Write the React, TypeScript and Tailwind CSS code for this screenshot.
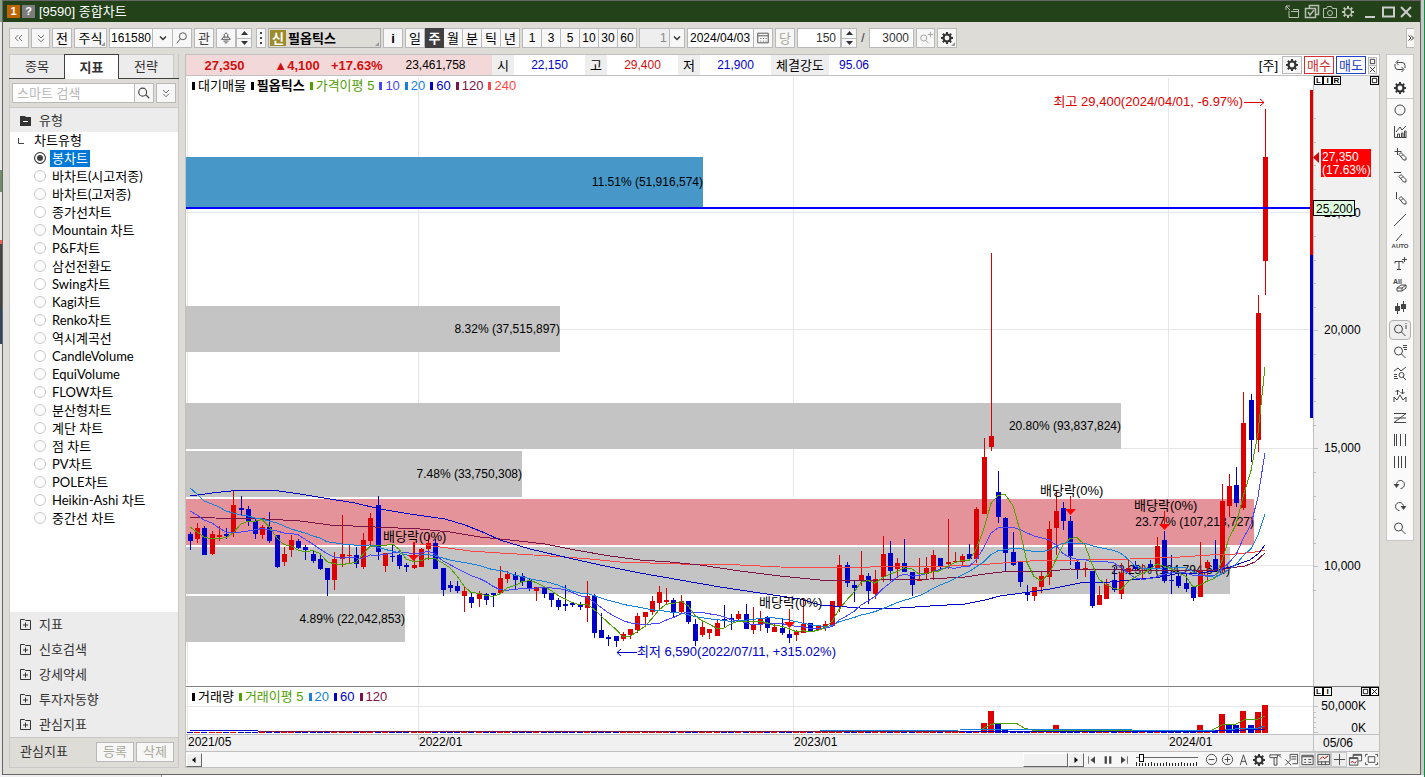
import type { ReactNode } from 'react';

const FONT = "font-['Liberation_Sans','Noto_Sans_CJK_KR',sans-serif]";
const BTN = 'flex h-5 shrink-0 items-center justify-center border border-[#b9b9b9] bg-[#f7f7f7] text-[13px] leading-none text-black';

// colour, high, body top, body bottom, low (chart y)
type Candle = [string, number, number, number, number];

const candles: Candle[] = [
  ['b', 532, 534, 541, 550], ['r', 523, 528, 539, 543], ['b', 526, 528, 555, 555], ['r', 531, 534, 554, 555], ['r', 526, 535, 537, 541],
  ['b', 528, 534, 536, 539], ['r', 491, 505, 533, 537], ['b', 496, 508, 510, 515], ['b', 506, 509, 521, 526], ['b', 519, 521, 534, 539],
  ['r', 525, 527, 535, 539], ['b', 512, 527, 541, 543], ['b', 535, 535, 567, 568], ['r', 547, 554, 562, 566], ['r', 535, 540, 550, 557],
  ['b', 539, 541, 548, 549], ['b', 545, 547, 550, 560], ['b', 551, 554, 561, 563], ['b', 553, 559, 569, 570], ['b', 568, 568, 580, 596],
  ['r', 552, 559, 580, 590], ['r', 515, 554, 559, 567], ['r', 544, 555, 556, 563], ['b', 547, 555, 564, 568], ['r', 533, 540, 567, 569],
  ['r', 513, 518, 541, 547], ['b', 496, 505, 552, 560], ['r', 553, 553, 566, 572], ['b', 544, 556, 557, 562], ['b', 554, 555, 566, 569],
  ['b', 563, 565, 567, 572], ['r', 542, 565, 568, 569], ['r', 548, 549, 567, 567], ['r', 535, 543, 549, 560], ['b', 539, 543, 569, 569],
  ['b', 568, 568, 590, 596], ['b', 581, 585, 588, 592], ['b', 581, 586, 591, 593], ['r', 587, 591, 596, 612], ['b', 592, 597, 603, 608],
  ['r', 591, 593, 599, 607], ['b', 593, 594, 600, 605], ['b', 593, 593, 595, 607], ['r', 566, 578, 593, 594], ['r', 571, 574, 579, 583],
  ['b', 572, 575, 580, 589], ['b', 573, 576, 582, 586], ['b', 579, 580, 589, 591], ['r', 587, 587, 591, 601], ['b', 586, 588, 594, 598],
  ['b', 593, 593, 600, 607], ['b', 598, 600, 607, 610], ['b', 585, 604, 606, 611], ['b', 602, 603, 605, 607], ['b', 602, 604, 607, 610],
  ['r', 581, 596, 608, 622], ['b', 594, 596, 633, 638], ['b', 613, 630, 638, 638], ['b', 635, 637, 639, 646], ['b', 636, 636, 641, 647],
  ['r', 632, 634, 639, 641], ['r', 629, 629, 635, 639], ['r', 613, 616, 630, 633], ['r', 612, 612, 617, 624], ['r', 596, 601, 612, 615],
  ['r', 586, 592, 603, 609], ['r', 588, 600, 602, 604], ['b', 598, 600, 613, 617], ['r', 595, 601, 612, 613], ['b', 601, 601, 622, 624],
  ['b', 619, 624, 641, 646], ['r', 620, 627, 635, 637], ['r', 629, 629, 633, 639], ['r', 620, 623, 636, 636], ['b', 605, 619, 620, 627],
  ['b', 614, 618, 620, 630], ['r', 611, 614, 619, 621], ['b', 604, 614, 629, 629], ['r', 607, 625, 630, 634], ['r', 611, 618, 625, 631],
  ['b', 616, 617, 628, 633], ['r', 623, 627, 632, 632], ['b', 618, 628, 633, 635], ['b', 630, 634, 638, 643], ['r', 630, 632, 635, 641],
  ['r', 598, 624, 633, 633], ['b', 623, 623, 632, 632], ['r', 625, 626, 630, 631], ['r', 621, 624, 628, 631], ['r', 601, 601, 626, 626],
  ['r', 555, 565, 607, 612], ['b', 562, 565, 583, 587], ['b', 580, 585, 588, 602], ['r', 551, 575, 581, 586], ['b', 573, 576, 591, 604],
  ['r', 570, 579, 594, 599], ['r', 536, 554, 577, 582], ['b', 541, 553, 571, 581], ['r', 558, 563, 569, 578], ['b', 539, 563, 572, 572],
  ['b', 572, 572, 585, 596], ['r', 558, 579, 581, 581], ['r', 557, 568, 574, 579], ['r', 550, 555, 572, 580], ['b', 558, 558, 567, 569],
  ['r', 519, 562, 564, 569], ['r', 552, 561, 562, 563], ['r', 554, 556, 562, 567], ['b', 544, 554, 559, 560], ['r', 507, 509, 559, 563],
  ['r', 438, 457, 514, 514], ['r', 253, 436, 447, 451], ['b', 471, 492, 517, 523], ['b', 517, 518, 553, 571], ['b', 532, 552, 565, 566],
  ['b', 562, 562, 582, 587], ['b', 585, 592, 595, 601], ['r', 587, 587, 596, 601], ['r', 571, 576, 587, 593], ['r', 521, 529, 577, 585],
  ['r', 490, 511, 528, 555], ['b', 502, 508, 521, 530], ['b', 516, 521, 556, 565], ['b', 559, 562, 570, 579], ['r', 562, 568, 570, 577],
  ['b', 571, 571, 606, 608], ['r', 586, 595, 605, 605], ['r', 579, 584, 599, 599], ['b', 567, 580, 590, 592], ['r', 563, 573, 594, 599],
  ['r', 559, 568, 572, 572], ['b', 561, 565, 569, 570], ['r', 564, 568, 569, 580], ['b', 560, 564, 568, 570], ['r', 537, 546, 568, 569],
  ['b', 531, 540, 581, 583], ['b', 555, 580, 581, 594], ['b', 573, 576, 586, 588], ['b', 574, 583, 589, 592], ['b', 586, 587, 598, 601],
  ['r', 542, 571, 597, 597], ['r', 560, 562, 568, 581], ['b', 540, 559, 571, 571], ['r', 484, 501, 570, 573], ['r', 474, 486, 506, 517],
  ['b', 467, 485, 503, 507], ['r', 392, 423, 508, 510], ['b', 394, 400, 440, 462], ['r', 295, 313, 440, 452], ['r', 109, 157, 261, 295],
];

const RED = '#dc0000';
const BLUE = '#0000c8';
const candleX = (i: number) => Math.round(190 + i * 7.215);

// simple moving average of the closes; head covers the weeks before the first full window
const average = (n: number, head: number[]) =>
  candles
    .map((_, i) => {
      if (i < n - 1) return `${candleX(i)},${head[i]}`;
      const sum = candles.slice(i - n + 1, i + 1).reduce((s, c) => s + (c[0] === 'r' ? c[2] : c[3]), 0);
      return `${candleX(i)},${(sum / n).toFixed(1)}`;
    })
    .join(' ');

const averages = [
  { color: '#ff4646', points: '420,544 440,547 470,551 500,553 550,556 590,559 620,562 680,564 740,565 780,567 840,568 900,566 950,566 990,564 1030,561 1080,560 1130,559 1180,557 1210,555 1235,554 1255,552 1265,550' },
  { color: '#7d1446', points: '190,517 215,518 265,519 300,521 330,525 375,527 420,529 450,532 480,537 510,540 545,544 575,550 610,556 640,560 670,562 700,565 740,571 780,576 820,580 880,580 930,579 965,577 985,574 1010,571 1050,571 1070,569 1130,570 1200,571 1215,570 1245,566 1255,562 1265,553' },
  { color: BLUE, points: '190,496 212,493 240,490 272,490 300,494 330,499 355,503 380,509 410,514 445,519 465,525 485,533 500,540 530,549 560,556 600,565 640,573 680,580 720,587 760,593 800,599 820,605 860,608 900,608 930,606 965,604 985,600 1000,596 1030,592 1050,589 1080,583 1110,582 1130,580 1160,577 1175,574 1200,573 1215,571 1230,567 1250,560 1258,554 1265,545' },
  { color: '#1482dc', points: average(20, [488, 494, 501, 504, 507, 511, 513, 515, 516, 518, 519, 521, 523, 526, 529, 531, 533, 536, 538]) },
  { color: '#4646ff', points: average(10, [511, 515, 520, 523, 528, 532, 533, 532, 531]) },
  { color: '#50a000', points: average(5, [527, 532, 537, 539]) },
];

const profile = [
  { y: 157, h: 51, end: 703, color: '#4798c8', label: '11.51% (51,916,574)' },
  { y: 306, h: 46, end: 560, color: '#c4c4c4', label: '8.32% (37,515,897)' },
  { y: 403, h: 46, end: 1121, color: '#c4c4c4', label: '20.80% (93,837,824)' },
  { y: 451, h: 46, end: 522, color: '#c4c4c4', label: '7.48% (33,750,308)' },
  { y: 499, h: 46, end: 1254, color: '#e5939a', label: '23.77% (107,213,727)' },
  { y: 547, h: 47, end: 1230, color: '#c4c4c4', label: '23.23% (104,794,648)' },
  { y: 596, h: 46, end: 405, color: '#c4c4c4', label: '4.89% (22,042,853)' },
];

const dividends = [
  { x: 413, text: 541, top: 542 },
  { x: 789, text: 607, top: 609 },
  { x: 1070, text: 495, top: 496 },
  { x: 1164, text: 510, top: 511 },
];

// index -> top of a tall volume bar and its colour
const volumes: Record<number, [number, string]> = {
  110: [723, RED], 111: [711, RED], 112: [724, BLUE], 113: [729, BLUE], 119: [730, RED], 120: [725, RED], 140: [725, RED], 142: [730, BLUE],
  143: [714, RED], 144: [724, BLUE], 145: [725, BLUE], 146: [711, RED], 147: [725, BLUE], 148: [712, RED], 149: [705, RED],
};

const chartTypes = [
  '봉차트', '바차트(시고저종)', '바차트(고저종)', '종가선차트', 'Mountain 차트', 'P&F차트', '삼선전환도', 'Swing차트', 'Kagi차트', 'Renko차트',
  '역시계곡선', 'CandleVolume', 'EquiVolume', 'FLOW차트', '분산형차트', '계단 차트', '점 차트', 'PV차트', 'POLE차트', 'Heikin-Ashi 차트', '중간선 차트',
];

function Ico({ d, fill, size = 16, w = 1, color = '#444', children }: { d?: string; fill?: string; size?: number; w?: number; color?: string; children?: ReactNode }) {
  return (
    <svg width={size} height={size} viewBox="0 0 16 16" fill="none" stroke={color} strokeWidth={w} className="shrink-0" aria-hidden="true">
      {d && <path d={d} />}
      {fill && <path d={fill} fill={color} stroke="none" />}
      {children}
    </svg>
  );
}

function Gear({ color = '#333', hollow = false }: { color?: string; hollow?: boolean }) {
  return (
    <Ico color={color}>
      <circle cx="8" cy="8" r="3.5" strokeWidth={hollow ? 1.2 : 2.2} />
      <path d="M8 2v2M8 12v2M2 8h2M12 8h2M3.8 3.8l1.4 1.4M10.8 10.8l1.4 1.4M3.8 12.2l1.4-1.4M10.8 5.2l1.4-1.4" strokeWidth="2" />
    </Ico>
  );
}

const PENCIL = 'M7 8.5l2-2 5 5v2.5h-2.5zM9 10.5l2-2';
const LENS = 'M10.5 7a4 4 0 1 1-8 0a4 4 0 1 1 8 0M9.5 10l4 4';

const tools: { name: string; icon: ReactNode }[] = [
  { name: '원형', icon: <Ico><circle cx="8" cy="8" r="5" /></Ico> },
  { name: '차트 통계', icon: <Ico d="M2.5 2v11.5h12M4 8l4-5 2 3 4-4M5.5 13V10h2v3M9.5 13V9h1.500v4M12.500 13V7h1.500v6" /> },
  { name: '십자선', icon: <Ico d={`M2.5 5.500h7M5.500 2v7${PENCIL}`} /> },
  { name: '수평선', icon: <Ico d={`M2 4.500h7${PENCIL}`} /> },
  { name: '수직선', icon: <Ico d={`M4.500 2v7${PENCIL}`} /> },
  { name: '추세선', icon: <Ico d="M2 14L14 2" /> },
  { name: '자동 추세선', icon: <svg width="18" height="18" viewBox="0 0 18 18" className="shrink-0"><path d="M5 8l6-7" stroke="#444" /><text x="9" y="15" textAnchor="middle" className="fill-[#444] text-[6px] font-bold">AUTO</text></svg> },
  { name: '텍스트', icon: <Ico d="M3 7.500V5.500h8v2M7 5.500v8M5 13.500h4M12.500 1v5M10 3.500h5" /> },
  { name: '모두 지우기', icon: <svg width="18" height="18" viewBox="0 0 18 18" className="shrink-0" fill="none"><text x="2" y="7" className="fill-[#444] text-[7px] font-bold">All</text><path d="M6 11l4-3h5v3l-4 3H6zM6 11h5v3M11 11l4-3" stroke="#444" /></svg> },
  { name: '캔들', icon: <Ico d="M5.500 3v11M11.500 1v11" fill="M3 6h5v5H3zM9 4h5v5H9z" /> },
  { name: '정보 조회', icon: <Ico d={`${LENS}M14 3v4M14 1v1`} /> },
  { name: '목록 조회', icon: <Ico d={`${LENS}M11 1.500h4M11 3.500h4M12 5.500h3`} /> },
  { name: '패턴 조회', icon: <Ico d="M2 5l4-3 3 3 5-4M2 8.500h3M2 10.500h3M2 12.500h4M12 9a2.500 2.500 0 1 1-5 0a2.500 2.500 0 1 1 5 0M11 11l3 3" /> },
  { name: '신호', icon: <Ico d="M2 14V9l3 3 3-5 3 5 3-3v5M5.500 2v5M3.500 4l2-2 2 2M10.500 1v5M8.500 4l2 2 2-2" /> },
  { name: '지그재그', icon: <Ico d="M2 3.500h12L2 12.500h12M2 8h12" /> },
  { name: '분할선', icon: <Ico d="M2.500 2v12M4.500 2v12M8.500 2v12M13.500 2v12" /> },
  { name: '등분선', icon: <Ico d="M2.500 2v12M6.500 2v12M9.500 2v12M13.500 2v12" /> },
  { name: '되돌리기', icon: <Ico d="M4.500 9a4 4 0 1 1 4 3.500" fill="M1.500 8h6L4.500 12z" /> },
  { name: '다시하기', icon: <Ico d="M11.500 9a4 4 0 1 0-4 3.500" fill="M8.500 8h6L11.500 12z" /> },
  { name: '확대', icon: <Ico d={LENS} /> },
];

const footTools: { name: string; icon: ReactNode; boxed?: boolean }[] = [
  { name: '축소', icon: <Ico size={15} d="M13.500 8a5.500 5.500 0 1 1-11 0a5.500 5.500 0 1 1 11 0M5 8h6" /> },
  { name: '확대', icon: <Ico size={15} d="M13.500 8a5.500 5.500 0 1 1-11 0a5.500 5.500 0 1 1 11 0M5 8h6M8 5v6" /> },
  { name: '자동', icon: <Ico size={15} d="M4.500 14L8 3l3.500 11M5.500 10h5" /> },
  { name: '설정', icon: <Gear /> },
  { name: '도구', icon: <Ico size={15} d="M2 3h9l3 3M2 3v3h8V3M6.500 6v8h3V6M11 3h3" /> },
  { name: '엑셀', icon: <Ico size={15} d="M6.500 8V2.500h8v10H9M8 5h5M8 7.500h5M1.500 8l6 6M7.500 8l-6 6" /> },
  { name: '데이터', boxed: true, icon: <Ico size={15} d="M2 3.500h12v10H2zM2 5h12M4.500 8h2M4.500 11h2M9 8h3M9 11h3" /> },
  { name: '보조 차트', boxed: true, icon: <Ico size={15} d="M2 2.500h12.500v11H2zM2 10.500h12M6 10v4M10 10v4"><path d="M4 8l3-3 2 2 4-3" stroke="#a00000" /></Ico> },
  { name: '십자', boxed: true, icon: <Ico size={15} d="M8 2v12M2 8h12" /> },
  { name: '겹치기', icon: <Ico size={15} d="M5.500 6V2.500h9v7H11M1.500 6h9v8h-9zM1.500 7h9M5.500 3.500h9"><path d="M3 11l2-1 2 2 2-2" stroke="#a00000" /></Ico> },
  { name: '전체 화면', icon: <Ico size={15} d="M4.500 5h7v6h-7zM1.500 5V2.500H4M12 2.500h2.500V5M1.500 11v2.500H4M12 13.500h2.500V11" /> },
];

function Spinner() {
  return (
    <span className="flex h-5 w-4 shrink-0 flex-col border border-[#b9b9b9] bg-[#f7f7f7]">
      <button aria-label="증가" className="flex flex-1 items-center justify-center border-b border-[#b9b9b9]">
        <svg width="7" height="4" viewBox="0 0 7 4"><path d="M0 4l3.500-4L7 4z" fill="#333" /></svg>
      </button>
      <button aria-label="감소" className="flex flex-1 items-center justify-center">
        <svg width="7" height="4" viewBox="0 0 7 4"><path d="M0 0l3.500 4L7 0z" fill="#333" /></svg>
      </button>
    </span>
  );
}

function Chevron() {
  return <Ico size={12} w={2} d="M4 6l4 4 4-4" color="#333" />;
}

function Corner() {
  return <svg width="4" height="4" viewBox="0 0 4 4" className="absolute right-px bottom-px"><path d="M4 0v4H0z" fill="#999" /></svg>;
}

function TitleBar() {
  return (
    <header className="flex h-[22px] items-center border-t border-[#666] bg-[#23421a] pl-1 text-[13px] leading-none text-white">
      <span className="mr-0.5 flex h-[13px] w-[13px] items-center justify-center bg-[#c06400] text-[11px] font-bold">1</span>
      <span className="mr-1 flex h-[13px] w-[13px] items-center justify-center bg-[#7c7c7c] text-[11px] font-bold">?</span>
      <h1>[9590] 종합차트</h1>
      <div className="ml-auto flex items-center gap-0.5">
        <button aria-label="분리"><Ico color="#b8c0b4" d="M5 6.500V13.500h9.500v-8H9M7 7.500h7M2 2l4 4M2 6V2h4" /></button>
        <button aria-label="선택" className="ml-0.5"><Ico color="#b8c0b4" d="M5.500 4.500V1.500h9v9H12M1.500 4.500h10v9h-10zM4 8l2 3 4-5" w={1.5} /></button>
        <button aria-label="캡처"><Ico color="#b8c0b4" d="M1.500 4.500h3l1-2h4l1 2h4v9h-13zM10.500 9a2.500 2.500 0 1 1-5 0a2.500 2.500 0 1 1 5 0" /></button>
        <button aria-label="설정"><Gear color="#c4cac0" hollow /></button>
        <button aria-label="최소화" className="ml-1"><Ico color="#ccc" w={2} d="M3 13h10" /></button>
        <button aria-label="최대화"><Ico color="#ccc" w={2} d="M3 3.500h11v9H3z" /></button>
        <button aria-label="닫기" className="mr-1.5"><Ico color="#ccc" w={2} d="M3 3l10 10M13 3L3 13" /></button>
      </div>
    </header>
  );
}

function Toolbar() {
  return (
    <div className="flex h-8 items-center gap-0.5 pl-1.5">
      <button aria-label="이전" className={`${BTN} w-5`}><Ico size={12} d="M7 4L3 8l4 4M12 4L8 8l4 4" /></button>
      <button aria-label="펼치기" className={`${BTN} w-[19px]`}><Ico size={12} d="M4 4l4 4 4-4M4 9l4 4 4-4" /></button>
      <button className={`${BTN} w-5`}>전</button>
      <button className={`${BTN} relative w-[33px]`}>주식<Corner /></button>
      <div className="flex">
        <input aria-label="종목코드" defaultValue="161580" className="h-5 w-11 border border-[#b9b9b9] bg-white pl-px text-[12px] text-black" />
        <button aria-label="목록" className={`${BTN} w-5 border-l-0`}><Chevron /></button>
        <button aria-label="찾기" className={`${BTN} w-[19px] border-l-0`}><Ico size={14} d="M13 6a4 4 0 1 1-8 0a4 4 0 1 1 8 0M6 9l-4 5" /></button>
      </div>
      <button className={`${BTN} w-5 !text-[#444]`}>관</button>
      <div className="flex">
        <button aria-label="알림" className={`${BTN} w-5`}><Ico size={14} d="M6 7V4l2-2 2 2v3M3 9.500h10L11 7H5zM5 11.500h6M6.500 13.500h3" /></button>
        <Spinner />
        <button aria-label="더보기" className={`${BTN} ml-1 w-2.5`}><Ico size={16} fill="M7 2h2v2H7zM7 7h2v2H7zM7 12h2v2H7z" /></button>
      </div>
      <button className="relative flex h-5 w-[113px] items-center border border-[#a8a8a8] bg-[#dddcd7] pl-px text-[13px] leading-none font-bold text-black">
        <span className="mr-0.5 flex h-4 w-4 items-center justify-center bg-[#9c8c2c] text-white">신</span>
        필옵틱스
        <Corner />
      </button>
      <button className={`${BTN} w-5 font-bold`}>i</button>
      <div className="flex border-l border-[#b9b9b9]">
        {['일', '주', '월', '분', '틱', '년'].map((p) => (
          <button key={p} className={p === '주' ? 'h-5 w-[19px] bg-[#404040] text-[13px] leading-none font-bold text-white' : `${BTN} w-[19px] border-l-0`}>{p}</button>
        ))}
      </div>
      <div className="flex border-l border-[#b9b9b9]">
        {[1, 3, 5, 10, 30, 60].map((n) => (
          <button key={n} className="flex h-5 w-[19px] items-center justify-center border border-l-0 border-[#b9b9b9] bg-[#f7f7f7] text-[12px] leading-none text-black">{n}</button>
        ))}
      </div>
      <div className="relative flex items-center">
        <select aria-label="주기" disabled className="h-5 w-[46px] appearance-none border border-[#b9b9b9] bg-[#eee] pl-5 text-[12px] text-[#888] opacity-100">
          <option>1</option>
        </select>
        <span className="pointer-events-none absolute right-0 flex h-5 w-4 items-center justify-center border border-[#b9b9b9] bg-[#f7f7f7]"><Chevron /></span>
      </div>
      <div className="flex">
        <input aria-label="날짜" defaultValue="2024/04/03" className="h-5 w-[67px] border border-[#b9b9b9] bg-white pl-0.5 text-[12px] text-black" />
        <button aria-label="달력" className={`${BTN} w-[19px] border-l-0`}><Ico size={14} d="M2 2.500h12v11H2zM2 5.500h12" fill="M5 8h1v1H5zM8 8h1v1H8zM11 8h1v1h-1zM5 11h1v1H5zM8 11h1v1H8zM11 11h1v1h-1z" /></button>
      </div>
      <button disabled className={`${BTN} w-5 !text-[#aaa89a]`}>당</button>
      <div className="flex">
        <input aria-label="표시 개수" defaultValue="150" className="h-5 w-11 border border-[#b9b9b9] bg-white pr-1 text-right text-[12px] text-[#333]" />
        <Spinner />
      </div>
      <span className="w-2 text-center text-[12px] text-[#333]">/</span>
      <input aria-label="전체 개수" defaultValue="3000" className="h-5 w-[45px] border border-[#b9b9b9] bg-white pr-1 text-right text-[12px] text-[#333]" />
      <button aria-label="추가 조회" className={`${BTN} w-[19px]`}><Ico size={14} color="#999" d="M9 8a3.500 3.500 0 1 1-7 0a3.500 3.500 0 1 1 7 0M8 11l3 3M13 1v6M10 4h6" /></button>
      <button aria-label="차트 설정" className={`${BTN} relative w-5`}><Gear /><Corner /></button>
      <button aria-label="더보기" className={`${BTN} mr-1.5 ml-auto w-2 border-r-0`}>
        <svg width="6" height="6" viewBox="0 0 6 6" fill="none" stroke="#333"><path d="M.5 .5L3 3L.5 5.500M3 .5L5.500 3L3 5.500" /></svg>
      </button>
    </div>
  );
}

function FolderIcon({ open = false }: { open?: boolean }) {
  return open ? (
    <svg width="11" height="11" viewBox="0 0 11 11" className="shrink-0"><path d="M0 1h5l1 1h5v9H0z" fill="#333" /><path d="M3 6.500h5" stroke="#fff" /></svg>
  ) : (
    <svg width="11" height="11" viewBox="0 0 11 11" fill="none" stroke="#333" className="shrink-0"><path d="M.5 .5h4l1 1h5v9H.5zM3 6h5M5.500 3.500v5" /></svg>
  );
}

function SidePanel() {
  return (
    <aside className="flex w-[170px] shrink-0 flex-col border border-t-0 border-[#c8c8c8] text-[13px] leading-none">
      <nav className="-mx-px flex h-[25px] border-b border-[#404040] text-[#333]">
        <button className="w-[55px] border-t border-l border-[#c8c8c8] bg-[#ececec]">종목</button>
        <button className="-mb-px w-[55px] border border-b-0 border-[#404040] bg-white font-bold">지표</button>
        <button className="w-[55px] border-t border-r border-[#c8c8c8] bg-[#ececec]">전략</button>
      </nav>
      <form className="flex h-7 items-center px-0.5" onSubmit={(e) => e.preventDefault()}>
        <input aria-label="스마트 검색" placeholder="스마트 검색" className="h-5 min-w-0 flex-1 border border-[#b9b9b9] bg-white pl-1 text-[13px] placeholder:text-[#b8b8b8]" />
        <button aria-label="검색" className={`${BTN} mr-0.5 w-[19px] border-l-0`}><Ico size={14} d="M11 7a4.500 4.500 0 1 1-9 0a4.500 4.500 0 1 1 9 0M10 10l4 4" w={1.3} /></button>
        <button aria-label="펼치기" className={`${BTN} w-5`}><Ico size={12} d="M4 4l4 4 4-4M4 9l4 4 4-4" /></button>
      </form>
      <button className="flex h-[25px] items-center gap-2 border-t border-[#c8c8c8] bg-[#ececec] pl-2.5 text-[#333]"><FolderIcon open />유형</button>
      <div className="flex-1 bg-white font-['Lato','Noto_Sans_CJK_KR',sans-serif] text-black">
        <div className="flex h-[17px] items-center pl-2">
          <svg width="6" height="6" viewBox="0 0 6 6" className="mr-2.5"><path d="M.5 0v5.500H6" fill="none" stroke="#444" /></svg>
          차트유형
        </div>
        {chartTypes.map((name, i) => (
          <label key={name} className="flex h-[18px] items-center pl-6">
            <input
              type="radio"
              name="chartType"
              defaultChecked={i === 0}
              className="mr-1 h-3 w-3 appearance-none rounded-full border border-[#c8c8c8] bg-white checked:border-[#404040] checked:bg-[#404040] checked:shadow-[inset_0_0_0_2px_white]"
            />
            <span className={i === 0 ? 'bg-[#0078d7] px-0.5 py-0.5 text-white' : 'px-0.5'}>{name}</span>
          </label>
        ))}
      </div>
      {['지표', '신호검색', '강세약세', '투자자동향', '관심지표'].map((name) => (
        <button key={name} className="flex h-[25px] items-center gap-2 bg-[#ececec] pl-2.5 text-[#333]"><FolderIcon />{name}</button>
      ))}
      <div className="flex h-[30px] items-center border-t border-[#c8c8c8] pb-0.5 pl-2.5 text-[#333]">
        관심지표
        <button disabled className={`${BTN} mr-0.5 ml-auto w-[38px] !text-[#aaa89a]`}>등록</button>
        <button disabled className={`${BTN} mr-1 w-[38px] !text-[#aaa89a]`}>삭제</button>
      </div>
    </aside>
  );
}

function QuoteBar() {
  const cell = 'flex h-full w-[71px] items-center justify-center';
  const head = 'flex h-full w-[22px] items-center justify-center bg-[#eee] text-[13px]';
  return (
    <div className="flex h-[22px] items-center border-y border-[#c0c0c0] text-[12px] leading-none text-black">
      <div className="flex h-full w-[306px] items-center bg-[#f2d8d8] text-center">
        <span className="w-[77px] text-[13px] font-bold text-[#d20f0f]">27,350</span>
        <span className="w-[68px] text-[13px] font-bold text-[#d20f0f]">▲4,100</span>
        <span className="w-12 text-[13px] font-bold text-[#d20f0f]">+17.63%</span>
        <span className="flex-1">23,461,758</span>
      </div>
      <span className={head}>시</span>
      <span className={`${cell} text-[#0000c8]`}>22,150</span>
      <span className={head}>고</span>
      <span className={`${cell} text-[#d20f0f]`}>29,400</span>
      <span className={head}>저</span>
      <span className={`${cell} text-[#0000c8]`}>21,900</span>
      <span className="flex h-full w-[58px] items-center justify-center bg-[#eee] text-[13px]">체결강도</span>
      <span className="pl-2.5 text-[#0000c8]">95.06</span>
      <div className="ml-auto flex items-center gap-0.5 pr-0.5">
        <span className="mr-0.5 text-[13px]">[주]</span>
        <button aria-label="설정" className={`${BTN} !h-[18px] w-5`}><Gear /></button>
        <button className="h-[18px] w-[30px] border border-[#d03030] text-[13px] text-[#d03030]">매수</button>
        <button className="h-[18px] w-[30px] border border-[#2040d0] text-[13px] text-[#2040d0]">매도</button>
        <span className="flex flex-col">
          <button aria-label="창 크기" className="border border-[#b9b9b9]"><Ico size={7} w={2} d="M3 3h10v10H3z" color="#222" /></button>
          <button aria-label="닫기" className="border border-t-0 border-[#b9b9b9]"><Ico size={7} w={2} d="M2 2l12 12M14 2L2 14" color="#222" /></button>
        </span>
      </div>
    </div>
  );
}

function Legend({ items }: { items: { label: string; color: string; bold?: boolean }[] }) {
  return (
    <ul className="absolute top-[3px] left-1.5 flex items-center gap-[5px] text-[13px] leading-none">
      {items.map((it) => (
        <li key={it.label} className="flex items-center gap-[3px]" style={{ color: it.color }}>
          <svg width="3" height="8" viewBox="0 0 3 8"><path d="M0 0h3v8H0z" fill="currentColor" /></svg>
          <span className={it.bold ? 'font-bold' : ''}>{it.label}</span>
        </li>
      ))}
    </ul>
  );
}

function PaneButtons({ left, right }: { left: string[]; right: string[] }) {
  const box = 'flex h-[9px] w-[9px] items-center justify-center border border-black bg-white text-[8px] leading-none font-bold text-black';
  return (
    <div className="absolute top-0 right-0 flex w-[65px] justify-between">
      <span className="flex">{left.map((t) => <button key={t} className={box}>{t}</button>)}</span>
      <span className="flex">
        {right.map((t) => (
          <button key={t} aria-label={t} className={box}>
            <Ico size={7} w={2} color="#000" d={t === '닫기' ? 'M2 2l12 12M14 2L2 14' : 'M3 3h10v10H3z'} />
          </button>
        ))}
      </span>
    </div>
  );
}

function PriceChart() {
  return (
    <section className="relative bg-white">
      <svg viewBox="186 76 1193 610" className="block w-full text-[12px]">
        <g shapeRendering="crispEdges">
          <path d="M187.500 78V684M418.500 78V686M793.500 78V686M1168.500 78V686M186 212.500H1313M186 329.500H1313M186 448.500H1313M186 565.500H1313" stroke="#e6e6e6" />
          {profile.map((p) => (
            <g key={p.y}>
              <rect x="186" y={p.y} width={p.end - 186} height={p.h} fill={p.color} />
              {p.y > 440 && p.y < 560 && <path d={`M186 ${p.y - 1}H${p.end}`} stroke="#fff" strokeWidth="2" />}
            </g>
          ))}
        </g>
        {profile.map((p) => (
          <text key={p.y} x={p.end} y={p.y === 157 ? 186 : p.y + 27} textAnchor="end">{p.label}</text>
        ))}
        <g shapeRendering="crispEdges">
          {candles.map(([c, high, top, bottom, low], i) => (
            <g key={i} fill={c === 'r' ? RED : BLUE}>
              <rect x={candleX(i)} y={high} width="1" height={low - high} />
              <rect x={candleX(i) - 2} y={top} width="5" height={Math.max(bottom - top, 1)} />
            </g>
          ))}
          {averages.map((a) => (
            <polyline key={a.color} points={a.points} fill="none" stroke={a.color} />
          ))}
          <rect x="186" y="207" width="1127" height="2" fill="#0000ff" />
          <rect x="1310" y="90" width="3" height="165" fill={RED} />
          <rect x="1310" y="255" width="3" height="163" fill={BLUE} />
          <rect x="1313" y="76" width="66" height="610" fill="#f0f0f0" />
          <path d="M1313.500 76V686" stroke="#c0c0c0" />
          {Array.from({ length: 21 }, (_, i) => (
            <path key={i} d={`M1314 ${Math.round(118 + i * 23.6)}h${(i - 4) % 5 === 0 ? 4 : 2}`} stroke="#c0c0c0" />
          ))}
        </g>
        {dividends.map((d) => (
          <g key={d.x}>
            <text x={d.x - 30} y={d.text} className="text-[13px]">배당락(0%)</text>
            <path d={`M${d.x + 0.5} ${d.top}v14`} stroke="#f00" />
            <path d={`M${d.x - 5} ${d.top + 13}h11l-5.500 6z`} fill="#f00" />
          </g>
        ))}
        <text x="1243" y="106" textAnchor="end" fill={RED} className="text-[13px]">최고 29,400(2024/04/01, -6.97%)</text>
        <path d="M1244 102.500h20M1260 99l4 3.500l-4 3.500" fill="none" stroke={RED} />
        <text x="637" y="656" fill={BLUE} className="text-[13px]">최저 6,590(2022/07/11, +315.02%)</text>
        <path d="M637 652.500h-20M621 649l-4 3.500l4 3.500" fill="none" stroke={BLUE} />
        <text x="1324" y="217">25,000</text>
        <text x="1324" y="334">20,000</text>
        <text x="1324" y="452">15,000</text>
        <text x="1324" y="570">10,000</text>
        <rect x="1321" y="149" width="50" height="28" fill="#f00" />
        <path d="M1319 152v11l-6-5.500z" fill="#dc0000" />
        <text x="1322" y="161" fill="#fff">27,350</text>
        <text x="1322" y="174" fill="#fff">(17.63%)</text>
        <rect x="1313.500" y="200.500" width="41" height="15" fill="#e0ffe0" stroke="#000" />
        <text x="1316" y="213">25,200</text>
      </svg>
      <Legend
        items={[
          { label: '대기매물', color: '#000' },
          { label: '필옵틱스', color: '#000', bold: true },
          { label: '가격이평 5', color: '#50a000' },
          { label: '10', color: '#4646ff' },
          { label: '20', color: '#1482dc' },
          { label: '60', color: BLUE },
          { label: '120', color: '#7d1446' },
          { label: '240', color: '#ff4646' },
        ]}
      />
      <PaneButtons left={['L', 'I', 'R']} right={['창 크기']} />
    </section>
  );
}

function VolumeChart() {
  return (
    <section className="relative border-t border-[#808080] bg-white">
      <svg viewBox="186 687 1193 64" className="block w-full text-[12px]">
        <g shapeRendering="crispEdges">
          <path d="M187.500 688V733M418.500 688V733M793.500 688V733M1168.500 688V733M186 706.500H1313" stroke="#e6e6e6" />
          {candles.map(([c], i) => {
            const [top, color] = volumes[i] ?? [i > 89 ? 731 : 732, c === 'r' ? RED : BLUE];
            return <rect key={i} x={candleX(i) - 3} y={top} width="6" height={733 - top} fill={color} />;
          })}
          <polyline points="190,730 258,730" stroke={BLUE} fill="none" />
          <polyline points="258,731 980,731" stroke="#7d1446" fill="none" />
          <polyline points="980,730 990,725 997,723 1016,723 1024,728 1032,730 1086,730 1212,730 1222,725 1236,724 1244,720 1258,719 1265,716" stroke="#50a000" fill="none" />
          <polyline points="820,731 960,730 985,729 1124,729 1132,730 1215,731 1235,729 1258,728 1265,726" stroke="#1482dc" fill="none" />
          <polyline points="960,731 1215,731 1245,730 1265,729" stroke={BLUE} fill="none" />
          <rect x="1313" y="687" width="66" height="64" fill="#f0f0f0" />
          <rect x="186" y="734" width="1127" height="17" fill="#f0f0f0" />
          <path d="M186 734.500H1379M1313.500 687V751M187.500 735v5M418.500 735v5M793.500 735v5M1168.500 735v5M1314 706.500h4M1314 712.500h2M1314 717.500h2M1314 722.500h2M1314 727.500h2M1314 732.500h4" stroke="#c0c0c0" />
        </g>
        <text x="188" y="746">2021/05</text>
        <text x="419" y="746">2022/01</text>
        <text x="794" y="746">2023/01</text>
        <text x="1169" y="746">2024/01</text>
        <text x="1366" y="710" textAnchor="end">50,000K</text>
        <text x="1366" y="732" textAnchor="end">0K</text>
        <text x="1323" y="747">05/06</text>
      </svg>
      <Legend
        items={[
          { label: '거래량', color: '#000' },
          { label: '거래이평 5', color: '#50a000' },
          { label: '20', color: '#1482dc' },
          { label: '60', color: BLUE },
          { label: '120', color: '#7d1446' },
        ]}
      />
      <PaneButtons left={['L', 'I']} right={['창 크기', '닫기']} />
    </section>
  );
}

function FootBar() {
  const scroll = 'flex h-[14px] w-4 items-center justify-center border border-t-white border-r-[#666] border-b-[#666] border-l-white bg-[#f0f0f0]';
  return (
    <div className="flex h-4 items-center border-t border-[#c0c0c0] bg-[#f7f7f7]">
      <div className="flex flex-1 items-center bg-[#f7f7f7]">
        <button aria-label="왼쪽" className={scroll}><Ico size={8} fill="M11 2v12L4 8z" color="#000" /></button>
        <span className="ml-auto h-[14px] w-[45px] border border-t-white border-r-[#666] border-b-[#666] border-l-white bg-[#f0f0f0]" />
        <button aria-label="오른쪽" className={scroll}><Ico size={8} fill="M5 2v12l7-6z" color="#000" /></button>
      </div>
      <div className="flex w-12 justify-around">
        <button aria-label="처음"><Ico size={12} d="M3.500 3v10" fill="M12 3v10L6 8z" /></button>
        <button aria-label="일시정지"><Ico size={12} w={3} d="M5 3v10M11 3v10" /></button>
        <button aria-label="끝"><Ico size={12} d="M12.500 3v10" fill="M4 3v10l6-5z" /></button>
      </div>
      <div className="mr-[5px] ml-1 flex w-[62px] flex-col">
        <input
          type="range"
          aria-label="봉 간격"
          defaultValue={6}
          className="h-2 w-full appearance-none bg-[linear-gradient(#666,#666)] bg-[length:100%_1px] bg-center bg-no-repeat [&::-webkit-slider-thumb]:h-2 [&::-webkit-slider-thumb]:w-[5px] [&::-webkit-slider-thumb]:appearance-none [&::-webkit-slider-thumb]:border [&::-webkit-slider-thumb]:border-black [&::-webkit-slider-thumb]:bg-white"
        />
        <svg width="62" height="4" viewBox="0 0 62 4" shapeRendering="crispEdges">
          <path d={Array.from({ length: 21 }, (_, i) => `M${i * 3 + 0.5} ${i % 5 === 0 ? 0 : 1}V4`).join('')} stroke="#222" />
        </svg>
      </div>
      {footTools.map((t) => (
        <button key={t.name} aria-label={t.name} className={t.boxed ? 'flex h-[15px] w-4 items-center justify-center border border-[#c8c8c8] bg-[#eee]' : 'flex h-[15px] w-4 items-center justify-center'}>
          {t.icon}
        </button>
      ))}
    </div>
  );
}

function ToolRail() {
  const item = 'flex h-[22px] w-full items-center justify-center';
  return (
    <aside className="mr-1.5 ml-1.5 flex w-7 shrink-0 flex-col self-start border border-[#c8c8c8] bg-[#fafafa] pb-px">
      <button aria-label="새로고침" className={item}><Ico d="M5 4.500h5a3 3 0 0 1 3 3V10M6.500 2L4 4.500L6.500 7M11 11.500H6a3 3 0 0 1-3-3V6M9.500 9l2.500 2.500L9.500 14" /></button>
      <button aria-label="설정" className={`${item} border-b border-[#c8c8c8]`}><Gear /></button>
      {tools.map((t) => (
        <button key={t.name} aria-label={t.name} className={item}>
          {t.name === '정보 조회' ? <span className="flex h-5 w-[22px] items-center justify-center rounded-sm border border-[#b0b0b0] bg-[#eee]">{t.icon}</span> : t.icon}
        </button>
      ))}
    </aside>
  );
}

// slivers of the windows that lie behind this one
function LeftEdge() {
  return (
    <div className="flex w-0.5 shrink-0 flex-col bg-[#e8e8e8]">
      <div className="h-[22px] bg-[#8aa08a]" />
      <div className="mt-[148px] h-[22px] bg-[#6f8f6c]" />
      <div className="mt-12 h-1 bg-[#f06050]" />
      <div className="h-16 bg-[#444]" />
      <div className="h-9 bg-[#33475c]" />
    </div>
  );
}

export default function App() {
  return (
    <div className={`flex min-h-screen flex-col bg-[#f0f0f0] ${FONT}`}>
      <div className="flex">
        <LeftEdge />
        <main className="min-w-0 flex-1 border-x border-b border-[#666] bg-[#dddcd7]">
          <TitleBar />
          <Toolbar />
          <div className="flex pb-1.5 pl-1.5">
            <SidePanel />
            <div className="ml-1.5 min-w-0 flex-1 border-x border-b border-[#c0c0c0] bg-white">
              <QuoteBar />
              <PriceChart />
              <VolumeChart />
              <FootBar />
            </div>
            <ToolRail />
          </div>
        </main>
        <div className="w-1 shrink-0 border-r border-[#0f9040] bg-[#c8c8c8]" />
      </div>
      <div className="flex flex-1 border-r border-[#0f9040]">
        <div className="w-[162px] border-r border-[#999]" />
        <div className="flex-1 bg-white" />
      </div>
    </div>
  );
}
